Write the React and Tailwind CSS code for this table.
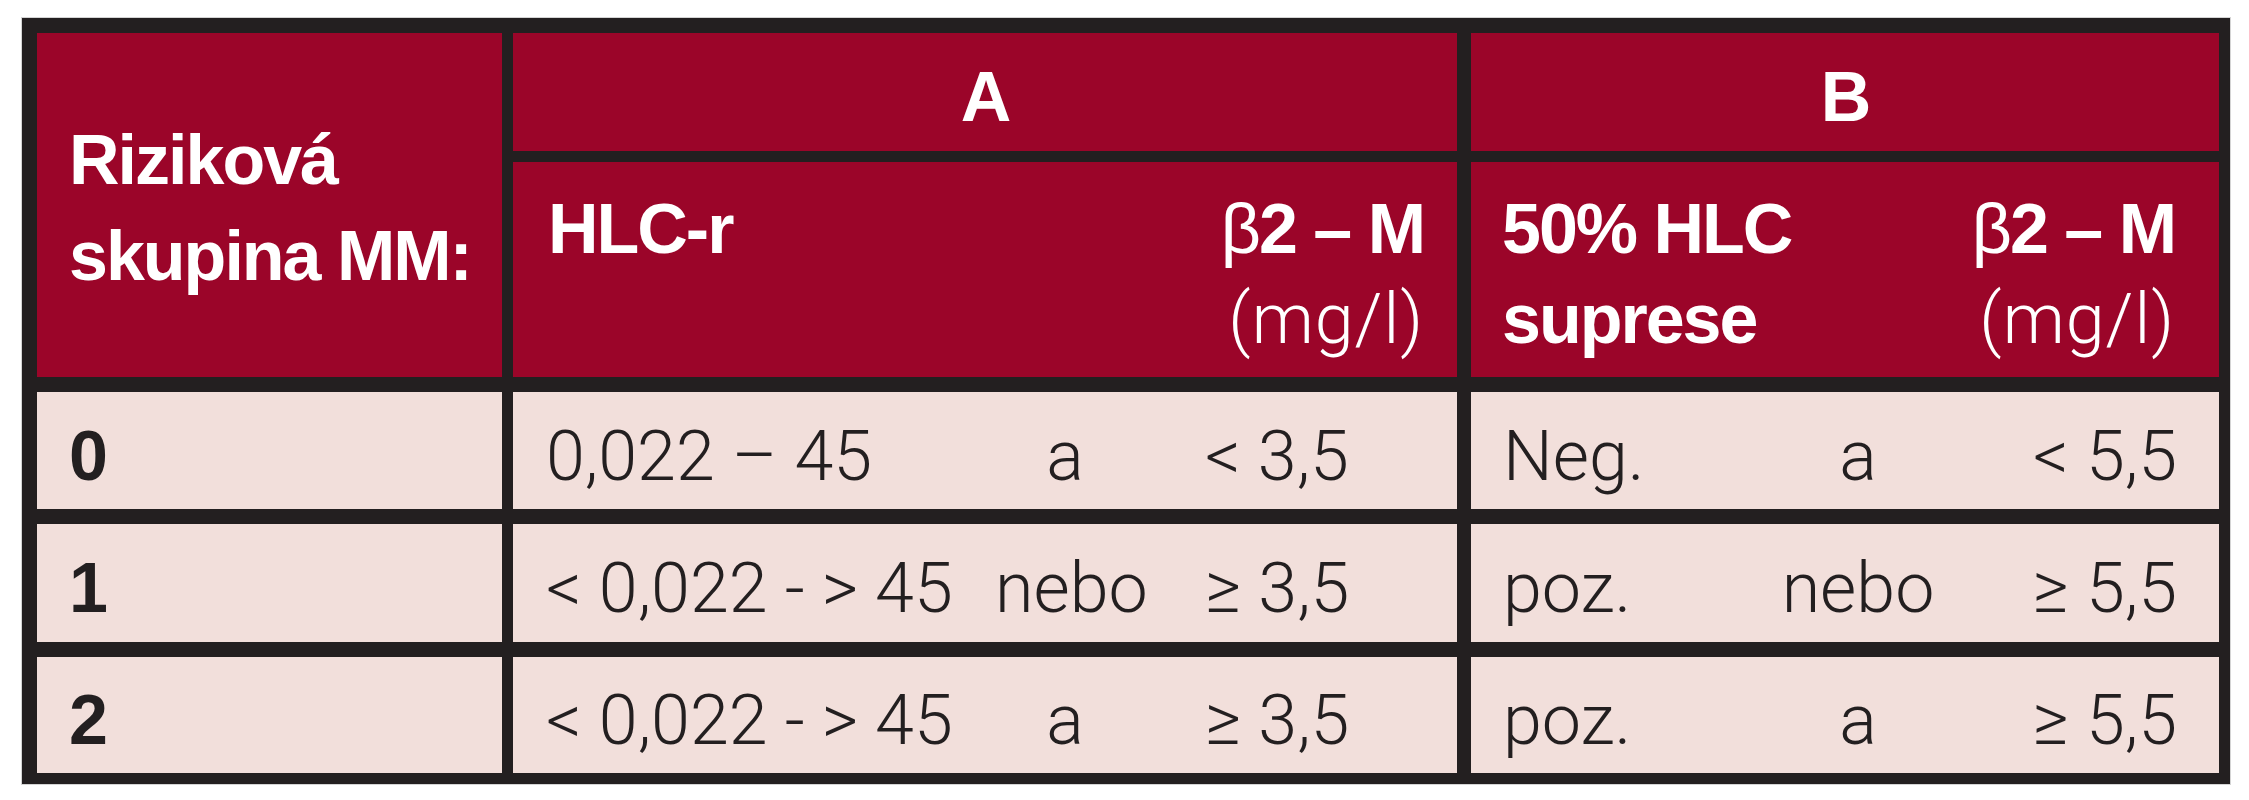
export default function App() {
  const head = "font-['Liberation_Sans',Arial,sans-serif] font-bold text-white text-[70px] tracking-[-2px]";
  const body = "font-['Roboto','Liberation_Sans',sans-serif] font-light text-[#231f20] text-[70px] leading-none";
  const rows = [
    { n: "0", a1: "0,022 – 45", a2: "a", a3: "< 3,5", b1: "Neg.", b2: "a", b3: "< 5,5" },
    { n: "1", a1: "< 0,022 - > 45", a2: "nebo", a3: "≥ 3,5", b1: "poz.", b2: "nebo", b3: "≥ 5,5" },
    { n: "2", a1: "< 0,022 - > 45", a2: "a", a3: "≥ 3,5", b1: "poz.", b2: "a", b3: "≥ 5,5" },
  ];
  const rowStart = ["row-start-5", "row-start-7", "row-start-9"];
  return (
    <div className="min-h-[800px] w-[2249px] bg-white pt-[17px] pl-[21px]">
      <div className="inline-block border border-[#d4d4d4]">
        <div className="grid bg-[#231f20] pt-[15px] pl-[15px] pr-[11px] pb-[11px] grid-cols-[465px_11px_944px_14px_748px] grid-rows-[118px_11px_215px_15px_117px_15px_118px_15px_116px]">
          <div className={`col-start-1 row-start-1 row-span-3 bg-[#9b0529] flex items-center pl-[32px] pt-[6px] leading-[96px] ${head}`}>
            <div>
              Riziková
              <br />
              skupina MM:
            </div>
          </div>
          <div className={`col-start-3 row-start-1 bg-[#9b0529] flex items-center justify-center leading-none ${head}`}>
            <span className="pt-[10px]">A</span>
          </div>
          <div className={`col-start-5 row-start-1 bg-[#9b0529] flex items-center justify-center leading-none ${head}`}>
            <span className="pt-[10px]">B</span>
          </div>
          <div className={`col-start-3 row-start-3 bg-[#9b0529] flex justify-between pl-[35px] pr-[33px] pt-[22px] leading-[90px] ${head}`}>
            <div>HLC-r</div>
            <div className="text-right">
              <div>
                <span className="font-normal">β</span>2 – M
              </div>
              <div className="font-['Roboto',sans-serif] font-light tracking-[1px]">(mg/l)</div>
            </div>
          </div>
          <div className={`col-start-5 row-start-3 bg-[#9b0529] flex justify-between pl-[31px] pr-[44px] pt-[22px] leading-[90px] ${head}`}>
            <div>
              <div>50% HLC</div>
              <div>suprese</div>
            </div>
            <div className="text-right">
              <div>
                <span className="font-normal">β</span>2 – M
              </div>
              <div className="font-['Roboto',sans-serif] font-light tracking-[1px]">(mg/l)</div>
            </div>
          </div>
          {rows.map((r, i) => (
            <div key={"n" + i} className={`col-start-1 ${rowStart[i]} bg-[#f2dfdb] flex items-center pl-[32px] pt-[10px] font-['Liberation_Sans',Arial,sans-serif] font-bold text-[70px] leading-none text-[#231f20]`}>
              {r.n}
            </div>
          ))}
          {rows.map((r, i) => (
            <div key={"a" + i} className={`col-start-3 ${rowStart[i]} bg-[#f2dfdb] flex items-center pl-[33px] pt-[10px] ${body}`}>
              <div className="w-[449px] whitespace-nowrap">{r.a1}</div>
              <div className="w-[140px] text-center">{r.a2}</div>
              <div className="ml-[70px] whitespace-nowrap">{r.a3}</div>
            </div>
          ))}
          {rows.map((r, i) => (
            <div key={"b" + i} className={`col-start-5 ${rowStart[i]} bg-[#f2dfdb] flex items-center pl-[32px] pr-[42px] pt-[10px] ${body}`}>
              <div className="w-[260px] whitespace-nowrap">{r.b1}</div>
              <div className="w-[190px] text-center">{r.b2}</div>
              <div className="flex-1 text-right whitespace-nowrap">{r.b3}</div>
            </div>
          ))}
        </div>
      </div>
    </div>
  );
}
